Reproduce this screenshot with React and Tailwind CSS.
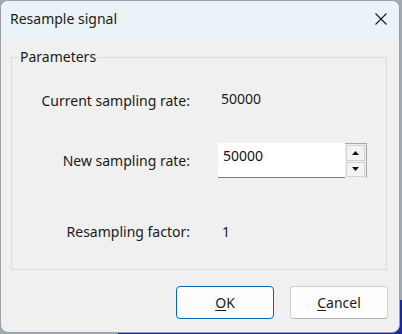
import React from "react";

// Resample signal dialog (Windows 11 look)

const FONT = { fontFamily: '"Noto Sans", "Open Sans", sans-serif' };

function CloseIcon() {
  return (
    <svg width="12" height="12" viewBox="0 0 12 12" aria-hidden="true">
      <path d="M0.5 0.5L11.5 11.5M11.5 0.5L0.5 11.5" stroke="#1a1a1a" strokeWidth="1.1" fill="none" />
    </svg>
  );
}

function SpinBox({ value }) {
  return (
    <div className="flex h-[35px] w-[149px]">
      <div className="flex-1 bg-white border-b border-[#7a7a7a] pl-[5px] pt-[3px] text-[#111]">
        {value}
      </div>
      <div className="flex w-[22px] flex-col gap-px border-t border-r border-[#a9a9a9] p-px bg-[#f0f0f0]">
        <button className="flex flex-1 items-center justify-center border border-[#d2d2d2] bg-[#f3f3f3]">
          <svg width="7" height="4" viewBox="0 0 7 4" aria-hidden="true">
            <path d="M0 4L3.5 0L7 4Z" fill="#111" />
          </svg>
        </button>
        <button className="flex flex-1 items-center justify-center border border-[#d2d2d2] bg-[#f3f3f3]">
          <svg width="7" height="4" viewBox="0 0 7 4" aria-hidden="true">
            <path d="M0 0L3.5 4L7 0Z" fill="#111" />
          </svg>
        </button>
      </div>
    </div>
  );
}

export default function App() {
  return (
    <div
      className="w-[402px] h-[334px] bg-[linear-gradient(to_bottom,#a3a9b0_300px,transparent_300px),linear-gradient(to_right,#a3a9b0_118px,#1d2a95_118px)]"
      style={FONT}
    >
      <div className="flex h-[333px] w-[400px] flex-col overflow-hidden rounded-[8px] border border-[#9aa0a6] bg-[#f0f0f0] text-[14px] leading-[20px] text-[#1a1a1a]">
        {/* Title bar */}
        <div className="flex h-[36px] items-center justify-between bg-[#eaf4f8] pl-[9px] pr-[12px]">
          <span>Resample signal</span>
          <CloseIcon />
        </div>

        {/* Body */}
        <div className="flex flex-col pt-[10px]">
          <fieldset className="ml-[10px] h-[223px] w-[376px] border border-[#dcdcdc]">
            <legend className="ml-[7px] px-[1px] leading-[20px]">Parameters</legend>

            <div className="mt-[22px] flex h-[22px] items-start">
              <span className="mt-[2px] w-[178px] text-right">Current sampling rate:</span>
              <span className="ml-[31px]">50000</span>
            </div>

            <div className="mt-[32px] flex h-[35px] items-start">
              <span className="mt-[8px] w-[178px] text-right">New sampling rate:</span>
              <div className="ml-[28px]">
                <SpinBox value="50000" />
              </div>
            </div>

            <div className="mt-[44px] flex h-[20px] items-start">
              <span className="w-[178px] text-right">Resampling factor:</span>
              <span className="ml-[32px]">1</span>
            </div>
          </fieldset>

          <div className="mt-[16px] flex justify-end gap-[16px] pr-[11px]">
            <button className="h-[33px] w-[98px] rounded-[4px] border border-[#0067c0] bg-[#fdfdfd]">
              <u className="underline-offset-2">O</u>K
            </button>
            <button className="h-[33px] w-[98px] rounded-[4px] border border-[#d0d0d0] border-b-[#b8b8b8] bg-[#fdfdfd]">
              <u className="underline-offset-2">C</u>ancel
            </button>
          </div>
        </div>
      </div>
    </div>
  );
}
